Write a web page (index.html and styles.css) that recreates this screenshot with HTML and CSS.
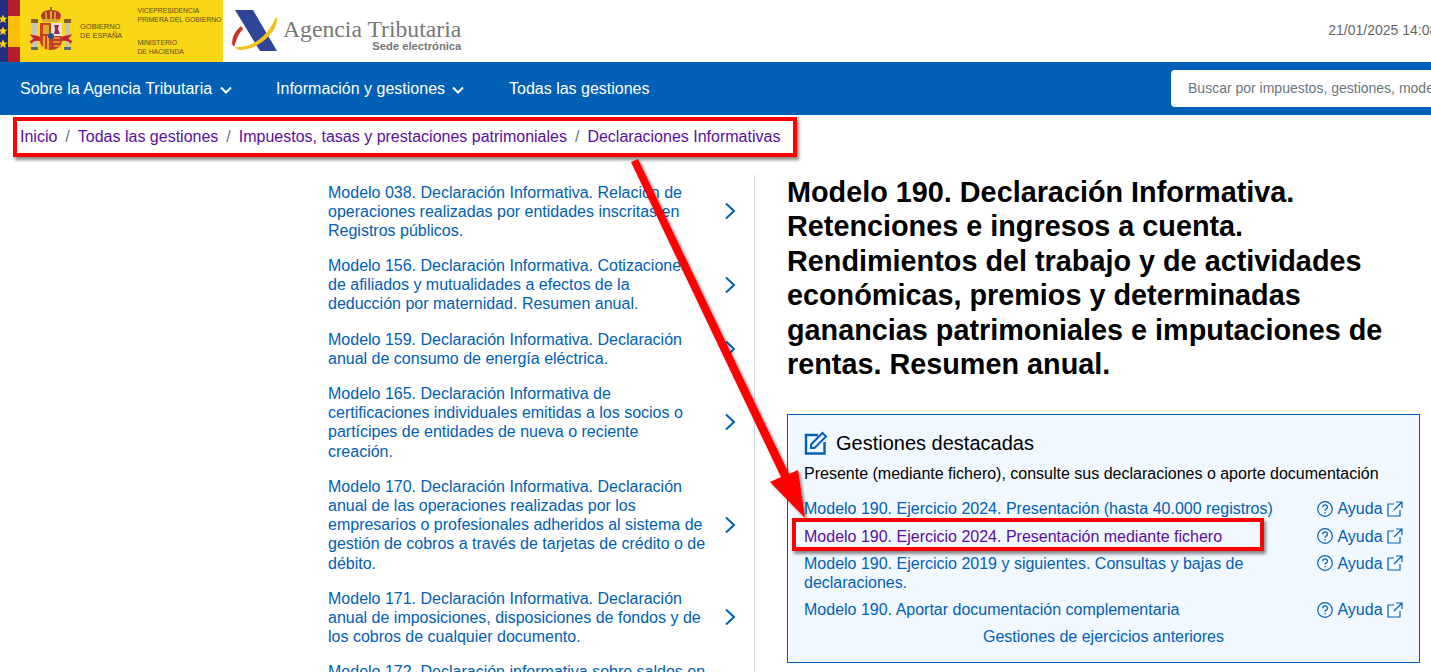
FILE: index.html
```html
<!doctype html>
<html lang="es">
<head>
<meta charset="utf-8">
<title>Modelo 190. Agencia Tributaria</title>
<link rel="stylesheet" href="styles.css">
</head>

<body>
<header class="top">
  <div class="gov">
    <svg class="flag" width="20" height="62" viewBox="0 0 20 62">
      <rect width="8" height="62" fill="#1f2f7f"/>
      <rect x="8" width="12" height="62" fill="#b51c2c"/>
      <rect x="8" y="16" width="12" height="31" fill="#fabd00"/>
      <g fill="#f9d616">
        <path id="st" d="M3 14.500l1.300 3 3.200.2-2.500 2.100.8 3.200L3 21.300l-2.800 1.700.8-3.200-2.500-2.100 3.200-.2z"/>
        <use href="#st" y="12"/>
        <use href="#st" y="25"/>
      </g>
    </svg>
    <svg class="arms" width="42" height="44" viewBox="0 0 42 44">
      <!-- pillars -->
      <rect x="2" y="15" width="5" height="25" fill="#c9c4b4"/>
      <rect x="35" y="15" width="5" height="25" fill="#c9c4b4"/>
      <rect x="1" y="12" width="7" height="4" fill="#8a5a2a"/>
      <rect x="34" y="12" width="7" height="4" fill="#8a5a2a"/>
      <rect x="1" y="40" width="7" height="3" fill="#5d6a7a"/>
      <rect x="34" y="40" width="7" height="3" fill="#5d6a7a"/>
      <!-- ribbons -->
      <path d="M0 27c4 2 7 1 10 3v4c-4-1-7 0-9 3l-1-3c2-1 3-2 4-3-2 0-3-2-4-4z" fill="#c8202f"/>
      <path d="M42 27c-4 2-7 1-10 3v4c4-1 7 0 9 3l1-3c-2-1-3-2-4-3 2 0 3-2 4-4z" fill="#c8202f"/>
      <!-- crown -->
      <path d="M11 9c0-4 5-6 10-6s10 2 10 6l-2 5H13z" fill="#b8352b"/>
      <path d="M20 3h2v11h-2zM15 5h1.500l1 9h-2zM26 5h-1.500l-1 9h2z" fill="#d9a92e"/>
      <rect x="20" y="0" width="2" height="4" fill="#8a6d1f"/>
      <rect x="13" y="12" width="16" height="3" fill="#d9a92e"/>
      <!-- shield -->
      <path d="M10 16h22v17c0 6-5 10-11 10s-11-4-11-10z" fill="#c23a2b"/>
      <path d="M10 16h11v27c-6 0-11-4-11-10z" fill="#c8401f"/>
      <path d="M13 29h2v12h-2zM17 29h2v14h-2z" fill="#e2a92a"/>
      <rect x="13" y="18" width="6" height="9" fill="#d9a92e"/>
      <rect x="21" y="16" width="11" height="13" fill="#efe7db"/>
      <path d="M24 18h5l-1 4 2 5h-6l1-5z" fill="#9c2c55"/>
      <path d="M23 31h7M23 35h7M24 39h5" stroke="#e2a92a" stroke-width="1.500"/>
      <circle cx="21" cy="29" r="3" fill="#2c4f9a"/>
    </svg>
    <div class="gov-name">GOBIERNO<br>DE ESPAÑA</div>
    <div class="gov-min">
      <div>VICEPRESIDENCIA<br>PRIMERA DEL GOBIERNO</div>
      <div>MINISTERIO<br>DE HACIENDA</div>
    </div>
  </div>
  <div class="aeat">
    <svg width="46" height="44" viewBox="0 0 46 44">
      <path d="M3 1h18l24 41H28z" fill="#2f4598"/>
      <path d="M0 35c0-7 3-13 9-18l2 3c-3 3-6 8-8 15l-1 3z" fill="#c8352b"/>
      <path d="M3 38c18 1 33-11 41-30l1 1c1 14-18 31-36 32-3 0-5-1-6-3z" fill="#f2c21a"/>
    </svg>
    <div class="aeat-name">
      <div class="aeat-title">Agencia Tributaria</div>
      <div class="aeat-sub">Sede electrónica</div>
    </div>
  </div>
  <div class="date">21/01/2025 14:08</div>
</header>

<nav class="nav">
  <a href="#">Sobre la Agencia Tributaria
    <svg width="12" height="8" viewBox="0 0 12 8"><path d="M1 1.500l5 5 5-5" fill="none" stroke="#fff" stroke-width="2"/></svg></a>
  <a href="#">Información y gestiones
    <svg width="12" height="8" viewBox="0 0 12 8"><path d="M1 1.500l5 5 5-5" fill="none" stroke="#fff" stroke-width="2"/></svg></a>
  <a href="#">Todas las gestiones</a>
  <input class="search" type="text" placeholder="Buscar por impuestos, gestiones, modelos...">
</nav>

<div class="crumbs">
  <a href="#">Inicio</a><span>/</span>
  <a href="#">Todas las gestiones</a><span>/</span>
  <a href="#">Impuestos, tasas y prestaciones patrimoniales</a><span>/</span>
  <a href="#">Declaraciones Informativas</a>
</div>

<main class="main">
  <ul class="side">
    <li><a href="#">Modelo 038. Declaración Informativa. Relación de operaciones realizadas por entidades inscritas en Registros públicos.</a><svg class="chev" width="12" height="18" viewBox="0 0 12 18"><path d="M2 1.500L10 9l-8 7.500" fill="none" stroke="#0060b5" stroke-width="2"/></svg></li>
    <li><a href="#">Modelo 156. Declaración Informativa. Cotizaciones de afiliados y mutualidades a efectos de la deducción por maternidad. Resumen anual.</a><svg class="chev" width="12" height="18" viewBox="0 0 12 18"><path d="M2 1.500L10 9l-8 7.500" fill="none" stroke="#0060b5" stroke-width="2"/></svg></li>
    <li><a href="#">Modelo 159. Declaración Informativa. Declaración anual de consumo de energía eléctrica.</a><svg class="chev" width="12" height="18" viewBox="0 0 12 18"><path d="M2 1.500L10 9l-8 7.500" fill="none" stroke="#0060b5" stroke-width="2"/></svg></li>
    <li><a href="#">Modelo 165. Declaración Informativa de certificaciones individuales emitidas a los socios o partícipes de entidades de nueva o reciente creación.</a><svg class="chev" width="12" height="18" viewBox="0 0 12 18"><path d="M2 1.500L10 9l-8 7.500" fill="none" stroke="#0060b5" stroke-width="2"/></svg></li>
    <li><a href="#">Modelo 170. Declaración Informativa. Declaración anual de las operaciones realizadas por los empresarios o profesionales adheridos al sistema de gestión de cobros a través de tarjetas de crédito o de débito.</a><svg class="chev" width="12" height="18" viewBox="0 0 12 18"><path d="M2 1.500L10 9l-8 7.500" fill="none" stroke="#0060b5" stroke-width="2"/></svg></li>
    <li><a href="#">Modelo 171. Declaración Informativa. Declaración anual de imposiciones, disposiciones de fondos y de los cobros de cualquier documento.</a><svg class="chev" width="12" height="18" viewBox="0 0 12 18"><path d="M2 1.500L10 9l-8 7.500" fill="none" stroke="#0060b5" stroke-width="2"/></svg></li>
    <li><a href="#">Modelo 172. Declaración informativa sobre saldos en monedas virtuales.</a><svg class="chev" width="12" height="18" viewBox="0 0 12 18"><path d="M2 1.500L10 9l-8 7.500" fill="none" stroke="#0060b5" stroke-width="2"/></svg></li>
  </ul>

  <section class="content">
    <h1>Modelo 190. Declaración Informativa. Retenciones e ingresos a cuenta. Rendimientos del trabajo y de actividades económicas, premios y determinadas ganancias patrimoniales e imputaciones de rentas. Resumen anual.</h1>

    <div class="panel">
      <h2>
        <svg width="24" height="24" viewBox="0 0 24 24"><path d="M14 4H2v18.500h18.500V11" fill="none" stroke="#0060b5" stroke-width="2.400"/><path d="M7 13.500L18.500 2l3.500 3.500L10.500 17H7z" fill="none" stroke="#0060b5" stroke-width="2"/></svg>
        Gestiones destacadas
      </h2>
      <p>Presente (mediante fichero), consulte sus declaraciones o aporte documentación</p>
      <div class="row">
        <a href="#">Modelo 190. Ejercicio 2024. Presentación (hasta 40.000 registros)</a>
        <a class="help" href="#"><svg width="16" height="16" viewBox="0 0 16 16"><circle cx="8" cy="8" r="7.300" fill="none" stroke="#0060b5" stroke-width="1.200"/><path d="M5.600 6.200c0-3 4.900-3 4.900 0 0 1.800-2.500 1.700-2.500 3.500" fill="none" stroke="#0060b5" stroke-width="1.200"/><circle cx="8" cy="11.800" r=".8" fill="#0060b5"/></svg>Ayuda<svg width="16" height="16" viewBox="0 0 16 16"><path d="M7 3H1v12h12V9M9 1h6v6M15 1L7 9" fill="none" stroke="#0060b5" stroke-width="1.200"/></svg></a>
      </div>
      <div class="row">
        <a class="seen" href="#">Modelo 190. Ejercicio 2024. Presentación mediante fichero</a>
        <a class="help" href="#"><svg width="16" height="16" viewBox="0 0 16 16"><circle cx="8" cy="8" r="7.300" fill="none" stroke="#0060b5" stroke-width="1.200"/><path d="M5.600 6.200c0-3 4.900-3 4.900 0 0 1.800-2.500 1.700-2.500 3.500" fill="none" stroke="#0060b5" stroke-width="1.200"/><circle cx="8" cy="11.800" r=".8" fill="#0060b5"/></svg>Ayuda<svg width="16" height="16" viewBox="0 0 16 16"><path d="M7 3H1v12h12V9M9 1h6v6M15 1L7 9" fill="none" stroke="#0060b5" stroke-width="1.200"/></svg></a>
      </div>
      <div class="row">
        <a href="#">Modelo 190. Ejercicio 2019 y siguientes. Consultas y bajas de declaraciones.</a>
        <a class="help" href="#"><svg width="16" height="16" viewBox="0 0 16 16"><circle cx="8" cy="8" r="7.300" fill="none" stroke="#0060b5" stroke-width="1.200"/><path d="M5.600 6.200c0-3 4.900-3 4.900 0 0 1.800-2.500 1.700-2.500 3.500" fill="none" stroke="#0060b5" stroke-width="1.200"/><circle cx="8" cy="11.800" r=".8" fill="#0060b5"/></svg>Ayuda<svg width="16" height="16" viewBox="0 0 16 16"><path d="M7 3H1v12h12V9M9 1h6v6M15 1L7 9" fill="none" stroke="#0060b5" stroke-width="1.200"/></svg></a>
      </div>
      <div class="row">
        <a href="#">Modelo 190. Aportar documentación complementaria</a>
        <a class="help" href="#"><svg width="16" height="16" viewBox="0 0 16 16"><circle cx="8" cy="8" r="7.300" fill="none" stroke="#0060b5" stroke-width="1.200"/><path d="M5.600 6.200c0-3 4.900-3 4.900 0 0 1.800-2.500 1.700-2.500 3.500" fill="none" stroke="#0060b5" stroke-width="1.200"/><circle cx="8" cy="11.800" r=".8" fill="#0060b5"/></svg>Ayuda<svg width="16" height="16" viewBox="0 0 16 16"><path d="M7 3H1v12h12V9M9 1h6v6M15 1L7 9" fill="none" stroke="#0060b5" stroke-width="1.200"/></svg></a>
      </div>
      <div class="older"><a href="#">Gestiones de ejercicios anteriores</a></div>
    </div>
  </section>
</main>

<!-- annotation drawn over the screenshot -->
<div class="mark mark-crumbs"></div>
<div class="mark mark-row"></div>
<svg class="arrow" width="1431" height="672" viewBox="0 0 1431 672">
  <defs><filter id="sh"><feDropShadow dx="2" dy="2" stdDeviation="1.500" flood-color="#000" flood-opacity=".45"/></filter></defs>
  <path d="M631 162l7-3 151 315 9-4 7 48-35-36 11-5z" fill="#f00" filter="url(#sh)"/>
</svg>
</body>
</html>
```

FILE: styles.css
```css
* {
  box-sizing: border-box;
}

html,
body {
  height: 672px;
  overflow: hidden;
}

body {
  margin: 0;
  background: #fff;
  color: #000;
  font-family: "Liberation Sans", Arial, sans-serif;
  font-size: 16px;
  line-height: 1.2;
}

a {
  color: #0060b5;
  text-decoration: none;
}

/* header */
.top {
  display: flex;
  height: 62px;
  white-space: nowrap;
}

.gov {
  display: flex;
  flex: none;
  width: 223px;
  background: #f9d616;
  color: #5b4a1a;
  font-size: 7.500px;
  line-height: 8.500px;
}

.arms {
  margin: 7px 0 0 10px;
}

.gov-name {
  margin: 23px 0 0 8px;
}

.gov-min {
  display: flex;
  flex-direction: column;
  justify-content: space-between;
  margin-left: 15px;
  padding: 7px 0 6px;
  font-size: 6.800px;
}

.aeat {
  display: flex;
  flex: none;
  margin-left: 9px;
  padding-top: 9px;
}

.aeat-name {
  margin-left: 5px;
  text-align: right;
}

.aeat-title {
  padding-top: 7px;
  color: #777;
  font-family: "Liberation Serif", serif;
  font-size: 23.700px;
  line-height: 26px;
}

.aeat-sub {
  color: #777;
  font-size: 11.200px;
  font-weight: bold;
  line-height: 8px;
}

.date {
  flex: none;
  margin-left: 867px;
  padding-top: 22px;
  color: #666;
  font-size: 14px;
}

/* nav */
.nav {
  display: flex;
  align-items: center;
  height: 53px;
  padding-left: 20px;
  background: #0060b5;
  white-space: nowrap;
}

.nav a {
  flex: none;
  margin-right: 44.500px;
  color: #fff;
}

.nav svg {
  margin-left: 3px;
}

.search {
  flex: none;
  width: 500px;
  height: 37px;
  margin-left: 477px;
  padding: 0 17px 2px;
  border: 0;
  border-radius: 4px;
  background: #fff;
  font: 14px "Liberation Sans", Arial, sans-serif;
}

.search::placeholder {
  color: #6c757d;
  opacity: 1;
}

/* breadcrumb */
.crumbs {
  display: flex;
  align-items: center;
  height: 43px;
  padding-left: 20px;
}

.crumbs a {
  color: #5a0ea0;
}

.crumbs span {
  margin: 0 8px;
  color: #6c757d;
}

/* main */
.main {
  display: grid;
  grid-template-columns: 427px 665px;
  padding: 16.500px 0 0 328px;
}

.side {
  margin: 0;
  padding: 0 18px 0 0;
  border-right: 1px solid #d5d9e3;
  list-style: none;
}

.side li {
  display: flex;
  align-items: center;
  justify-content: space-between;
  padding: 8px 0;
}

.side a {
  width: 378px;
}

.chev {
  flex: none;
}

.content {
  margin-left: 32px;
}

h1 {
  margin: 0 0 32.500px;
  font-size: 28.800px;
  line-height: 1.2;
}

.panel {
  height: 249px;
  padding: 16px 16px 0;
  border: 1px solid #0060b5;
  background: #f2f8ff;
}

h2 {
  display: flex;
  align-items: center;
  gap: 8px;
  margin: 0 0 9px;
  font-size: 20px;
  font-weight: normal;
  line-height: 24px;
}

.panel p {
  margin: 0 0 16px;
}

.row {
  display: grid;
  grid-template-columns: 1fr 86px;
  column-gap: 27px;
  padding-bottom: 8px;
}

.help {
  display: flex;
  align-items: center;
  align-self: start;
  justify-content: space-between;
}

.seen {
  color: #5a0ea0;
}

.older {
  text-align: center;
}

/* annotation */
.mark {
  position: absolute;
  border: 4px solid #f00;
  box-shadow: 2px 3px 3px rgba(0, 0, 0, 0.45);
}

.mark-crumbs {
  top: 117px;
  left: 13px;
  width: 784px;
  height: 40px;
}

.mark-row {
  top: 518px;
  left: 792px;
  width: 472px;
  height: 33px;
}

.arrow {
  position: absolute;
  top: 0;
  left: 0;
}
```
